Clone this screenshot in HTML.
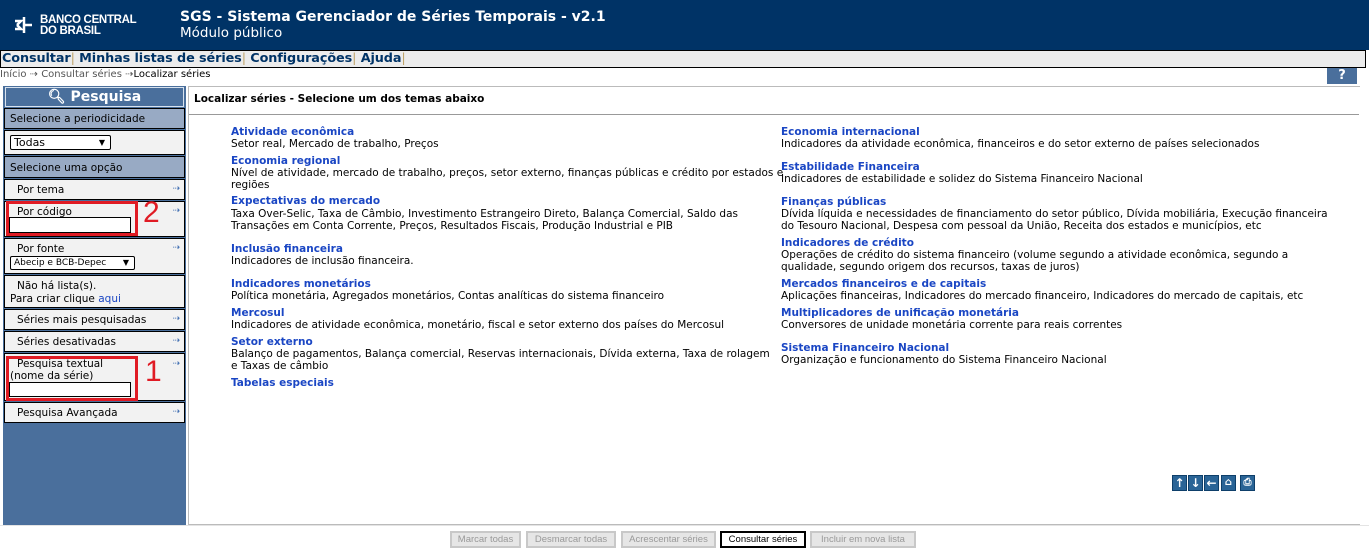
<!DOCTYPE html>
<html><head><meta charset="utf-8"><style>
*{margin:0;padding:0;box-sizing:border-box}
body{width:1369px;height:552px;background:#fff;font-family:"DejaVu Sans","Liberation Sans",sans-serif;font-size:10.5px;color:#000;position:relative;overflow:hidden}
.hdr{position:absolute;left:0;top:0;width:1369px;height:50px;background:#003366;color:#fff}
.menu{position:absolute;left:0;top:50px;width:1366px;height:18px;background:#ececec;border:1px solid #000;font-weight:bold;font-size:12.8px;color:#003366;line-height:16px;padding-left:1px;letter-spacing:-0.1px}
.menu span{color:#bfa46a;font-weight:normal}
.bc{position:absolute;left:0;top:68px;font-size:10px;color:#555;line-height:13px}
.help{position:absolute;left:1327px;top:68px;width:30px;height:16px;background:#4a6f9c;color:#fff;font-weight:bold;text-align:center;font-size:13px;line-height:16px}
.side{position:absolute;left:3px;top:86px;width:183px;height:439px;background:#4a6f9c}
.sh{position:absolute;left:2px;top:1px;width:179px;height:20px;border:1px solid #d8e2ee;color:#fff;font-weight:bold;font-size:14px;line-height:18px;text-align:center}
.box{position:absolute;left:1px;width:181px;border:1px solid #000;background:#f2f2f2;font-size:10.5px}
.gray{background:#98aac4}
.arr{position:absolute;right:4px;top:4px;color:#3a6ab0;font-size:9px}
.inp{position:absolute;background:#fff;border:1px solid #000;height:15px}
.main{position:absolute;left:188px;top:86px;width:1172px;height:439px;border:1px solid #bbb;border-right:none}
.t{position:absolute;font-weight:bold;color:#1a46c4;font-size:10.5px;line-height:12px}
.d{position:absolute;font-size:10.5px;line-height:12px;width:550px}
.btns{position:absolute;top:531px;height:17px;border:2px solid #c8c8c8;background:#e6e6e6;color:#999;font-size:9.5px;line-height:13px;text-align:center;font-family:"Liberation Sans",sans-serif}
.ic{position:absolute;top:475px;width:15px;height:16px;background:#2a6496;border:1px solid #0e3f6a;color:#fff;font-weight:bold;font-size:12px;text-align:center;line-height:14px}
.red{position:absolute;border:3px solid #e01b24}
.num{position:absolute;color:#e01b24;font-size:30px;font-family:"Liberation Sans",sans-serif}
</style></head><body>
<div class="hdr">
 <svg style="position:absolute;left:12px;top:15px" width="26" height="20" viewBox="0 0 26 20"><path d="M3 6h6l-4 4M3 14h6l-4-4M12 2v8h8M12 18v-8h8" stroke="#fff" stroke-width="2.5" fill="none"/></svg>
 <div style="position:absolute;left:40px;top:15px;font-weight:bold;font-size:11.5px;line-height:11px;font-family:'Liberation Sans',sans-serif;letter-spacing:-0.3px">BANCO CENTRAL<br>DO BRASIL</div>
 <div style="position:absolute;left:180px;top:9px;font-weight:bold;font-size:14px">SGS - Sistema Gerenciador de Séries Temporais - v2.1</div>
 <div style="position:absolute;left:180px;top:25px;font-size:13.5px">Módulo público</div>
</div>
<div class="menu">Consultar<span>|</span> Minhas listas de séries<span>|</span> Configurações<span>|</span> Ajuda<span>|</span></div>
<div class="bc">Início ⇢ Consultar séries ⇢<span style="color:#000">Localizar séries</span></div>
<div class="help">?</div>
<div class="side">
 <div class="sh">&#x1F50D;&#xFE0E; Pesquisa</div>
 <div class="box gray" style="top:22px;height:21px;padding:4px 5px">Selecione a periodicidade</div>
 <div class="box" style="top:44px;height:25px"><div class="inp" style="left:5px;top:4px;width:101px;height:15px;border-radius:2px;padding-left:3px;font-size:11px;line-height:13px">Todas<span style="position:absolute;right:5px;font-size:8px">&#9660;</span></div></div>
 <div class="box gray" style="top:70px;height:22px;padding:5px 5px">Selecione uma opção</div>
 <div class="box" style="top:93px;height:21px;padding:4px 12px">Por tema<span class="arr">⇢</span></div>
 <div class="box" style="top:115px;height:36px;padding:4px 12px">Por código<span class="arr">⇢</span></div>
 <div class="box" style="top:152px;height:36px;padding:4px 12px">Por fonte<span class="arr">⇢</span>
  <div class="inp" style="left:5px;top:17px;width:125px;height:14px;border-radius:2px;font-size:9px;padding-left:3px;line-height:12px">Abecip e BCB-Depec<span style="position:absolute;right:5px;font-size:8px">&#9660;</span></div></div>
 <div class="box" style="top:189px;height:33px;padding:4px 12px;line-height:13px">Não há lista(s).<br><span style="margin-left:-7px">Para criar clique <span style="color:#1a46c4">aqui</span></span></div>
 <div class="box" style="top:223px;height:21px;padding:4px 12px">Séries mais pesquisadas<span class="arr">⇢</span></div>
 <div class="box" style="top:245px;height:21px;padding:4px 12px">Séries desativadas<span class="arr">⇢</span></div>
 <div class="box" style="top:267px;height:48px;padding:4px 12px;line-height:12px">Pesquisa textual<br><span style="margin-left:-7px">(nome da série)</span><span class="arr">⇢</span></div>
 <div class="box" style="top:316px;height:21px;padding:4px 12px">Pesquisa Avançada<span class="arr">⇢</span></div>
</div>
<div class="inp" style="left:9px;top:217px;width:122px;height:16px"></div>
<div class="inp" style="left:9px;top:382px;width:122px;height:15px"></div>
<div class="red" style="left:6px;top:201px;width:132px;height:35px"></div>
<div class="red" style="left:6px;top:356px;width:132px;height:45px"></div>
<div class="num" style="left:143px;top:196px">2</div>
<div class="num" style="left:145px;top:355px">1</div>
<div class="main">
 <div style="position:absolute;left:5px;top:6px;font-weight:bold;font-size:10.5px">Localizar séries - Selecione um dos temas abaixo</div>
 <div style="position:absolute;left:0;top:27px;width:1170px;height:1px;background:#999"></div>
</div>
<div class="t" style="left:231px;top:126px">Atividade econômica</div><div class="d" style="left:231px;top:138px">Setor real, Mercado de trabalho, Preços</div>
<div class="t" style="left:231px;top:155px">Economia regional</div><div class="d" style="left:231px;top:167px;width:556px">Nível de atividade, mercado de trabalho, preços, setor externo, finanças públicas e crédito por estados e regiões</div>
<div class="t" style="left:231px;top:195px">Expectativas do mercado</div><div class="d" style="left:231px;top:208px">Taxa Over-Selic, Taxa de Câmbio, Investimento Estrangeiro Direto, Balança Comercial, Saldo das Transações em Conta Corrente, Preços, Resultados Fiscais, Produção Industrial e PIB</div>
<div class="t" style="left:231px;top:243px">Inclusão financeira</div><div class="d" style="left:231px;top:255px">Indicadores de inclusão financeira.</div>
<div class="t" style="left:231px;top:278px">Indicadores monetários</div><div class="d" style="left:231px;top:290px">Política monetária, Agregados monetários, Contas analíticas do sistema financeiro</div>
<div class="t" style="left:231px;top:307px">Mercosul</div><div class="d" style="left:231px;top:319px">Indicadores de atividade econômica, monetário, fiscal e setor externo dos países do Mercosul</div>
<div class="t" style="left:231px;top:336px">Setor externo</div><div class="d" style="left:231px;top:348px;width:545px">Balanço de pagamentos, Balança comercial, Reservas internacionais, Dívida externa, Taxa de rolagem e Taxas de câmbio</div>
<div class="t" style="left:231px;top:377px">Tabelas especiais</div>
<div class="t" style="left:781px;top:126px">Economia internacional</div><div class="d" style="left:781px;top:138px;width:560px">Indicadores da atividade econômica, financeiros e do setor externo de países selecionados</div>
<div class="t" style="left:781px;top:161px">Estabilidade Financeira</div><div class="d" style="left:781px;top:173px;width:560px">Indicadores de estabilidade e solidez do Sistema Financeiro Nacional</div>
<div class="t" style="left:781px;top:196px">Finanças públicas</div><div class="d" style="left:781px;top:208px;width:552px">Dívida líquida e necessidades de financiamento do setor público, Dívida mobiliária, Execução financeira do Tesouro Nacional, Despesa com pessoal da União, Receita dos estados e municípios, etc</div>
<div class="t" style="left:781px;top:237px">Indicadores de crédito</div><div class="d" style="left:781px;top:249px;width:530px">Operações de crédito do sistema financeiro (volume segundo a atividade econômica, segundo a qualidade, segundo origem dos recursos, taxas de juros)</div>
<div class="t" style="left:781px;top:278px">Mercados financeiros e de capitais</div><div class="d" style="left:781px;top:290px;width:560px">Aplicações financeiras, Indicadores do mercado financeiro, Indicadores do mercado de capitais, etc</div>
<div class="t" style="left:781px;top:307px">Multiplicadores de unificação monetária</div><div class="d" style="left:781px;top:319px;width:560px">Conversores de unidade monetária corrente para reais correntes</div>
<div class="t" style="left:781px;top:342px">Sistema Financeiro Nacional</div><div class="d" style="left:781px;top:354px;width:560px">Organização e funcionamento do Sistema Financeiro Nacional</div>
<div class="ic" style="left:1172px">↑</div><div class="ic" style="left:1188px">↓</div><div class="ic" style="left:1204px">←</div><div class="ic" style="left:1221px;font-size:10px">⌂</div><div class="ic" style="left:1240px;font-size:10px">⎙</div>
<div style="position:absolute;left:0;top:525px;width:1369px;height:27px;background:#fff;border-top:1px solid #e4e4e4"></div>
<div class="btns" style="left:450px;width:71px">Marcar todas</div>
<div class="btns" style="left:526px;width:90px">Desmarcar todas</div>
<div class="btns" style="left:621px;width:95px">Acrescentar séries</div>
<div class="btns" style="left:720px;width:86px;border-color:#000;background:#fff;color:#000">Consultar séries</div>
<div class="btns" style="left:810px;width:106px">Incluir em nova lista</div>
</body></html>
